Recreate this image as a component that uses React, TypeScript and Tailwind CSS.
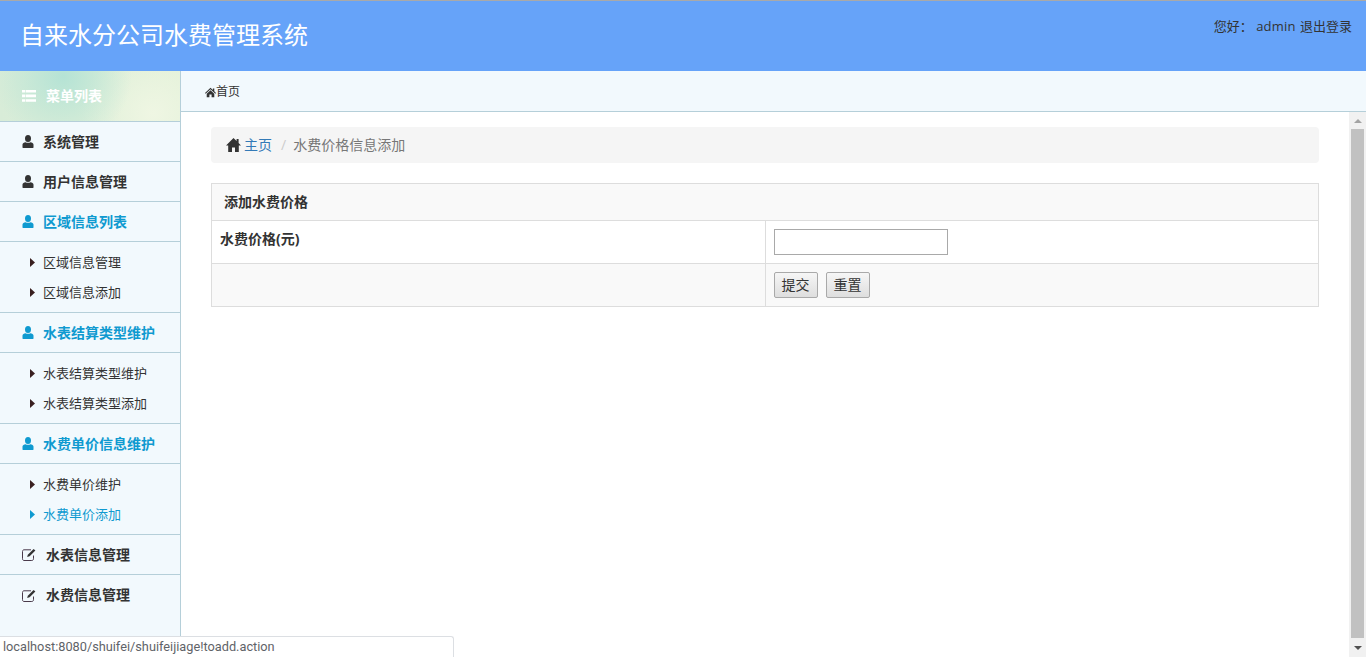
import React from 'react';

const UserIcon = () => (
  <svg width="12" height="13" viewBox="0 0 12 13" className="shrink-0 fill-current">
    <ellipse cx="6" cy="3.6" rx="3" ry="3.5" />
    <path d="M0.5 12.6 V9.6 C0.5 8.2 2 7.6 3.6 7.2 C4.6 8 7.4 8 8.4 7.2 C10 7.6 11.5 8.2 11.5 9.6 V12.6 C11.5 12.9 11.2 13 11 13 H1 C0.8 13 0.5 12.9 0.5 12.6 Z" />
  </svg>
);

const EditIcon = () => (
  <svg width="14" height="13" viewBox="0 0 14 13" className="shrink-0">
    <path d="M11.5 7.5 V10.7 C11.5 11.7 10.9 12.5 9.8 12.5 H2 C1 12.5 0.5 11.7 0.5 10.7 V3.5 C0.5 2.6 1 1.8 2 1.8 H9" fill="none" stroke="#4a3a4a" />
    <path d="M11.6 1 L13.4 2.6 L7.6 8.3 L5.2 8.9 L5.8 6.7 Z" fill="#333" />
  </svg>
);

const Arrow = () => (
  <svg width="5" height="9" viewBox="0 0 5 9" className="shrink-0 fill-current">
    <path d="M0 0 L5 4.5 L0 9 Z" />
  </svg>
);

const ListIcon = () => (
  <svg width="14" height="12" viewBox="0 0 14 12" className="shrink-0 fill-white">
    <path d="M0 0h3v2.6H0zM3.6 0H14v2.6H3.6zM0 4.6h3v2.6H0zM3.6 4.6H14v2.6H3.6zM0 9.2h3v2.6H0zM3.6 9.2H14v2.6H3.6z" />
  </svg>
);

const SmallHomeIcon = () => (
  <svg width="11" height="11" viewBox="0 0 16 16" className="shrink-0 fill-current">
    <path d="M8 1 L11.5 4.4 V2 H13.5 V6.3 L16 8.8 L15 9.8 L8 3.2 L1 9.8 L0 8.8 Z" />
    <path d="M8 4.6 L13.5 9.8 V15 H9.6 V11 H6.4 V15 H2.5 V9.8 Z" />
  </svg>
);

const HomeIcon = () => (
  <svg width="15" height="14" viewBox="0 0 15 14" className="shrink-0 fill-[#333]">
    <path d="M7.5 0 L10.6 3 V1 H12.6 V5 L15 7.4 H12.8 V14 H9 V9.4 H6 V14 H2.2 V7.4 H0 Z" />
  </svg>
);

function MenuRow({ label, active, edit, last }: { label: string; active?: boolean; edit?: boolean; last?: boolean }) {
  return (
    <div className={`flex h-10 items-center pl-[22px] text-sm font-bold ${last ? '' : 'border-b border-[#b5cfd9]'} ${active ? 'text-[#0f9ad0]' : 'text-[#333]'}`}>
      {edit ? <EditIcon /> : <UserIcon />}
      <span className={edit ? 'ml-[10px]' : 'ml-[9px]'}>{label}</span>
    </div>
  );
}

function SubList({ items, activeItem }: { items: string[]; activeItem?: string }) {
  return (
    <div className="h-[71px] border-b border-[#b5cfd9] py-[5px]">
      {items.map((item) => (
        <div key={item} className={`flex h-[30px] items-center pl-[30px] text-[13px] ${item === activeItem ? 'text-[#0f9ad0]' : 'text-[#333]'}`}>
          <span className={item === activeItem ? 'text-[#0f9ad0]' : 'text-[#3a2020]'}>
            <Arrow />
          </span>
          <span className="mt-[2px] ml-2">{item}</span>
        </div>
      ))}
    </div>
  );
}

export default function App() {
  return (
    <div className="relative flex h-[657px] flex-col overflow-hidden bg-white font-['Open_Sans','Noto_Sans_CJK_SC',sans-serif] text-[#333]">
      {/* header */}
      <div className="flex h-[71px] shrink-0 items-start justify-between border-t border-[#a9a9a9] bg-[#66a3f9]">
        <h1 className="mt-[16px] ml-5 text-2xl leading-9 font-normal text-white">自来水分公司水费管理系统</h1>
        <div className="mt-[14px] mr-[14px] text-[13px] leading-[22px] text-[#333]">您好：&nbsp;<span className="mr-px tracking-[0.2px]">admin</span> 退出登录</div>
      </div>

      <div className="flex min-h-0 flex-1">
        {/* sidebar */}
        <div className="w-[181px] shrink-0 border-r border-[#b5cfd9] bg-[#f2f9fd]">
          <div className="flex h-[51px] items-center border-b border-[#b5cfd9] bg-[radial-gradient(circle_at_35%_10%,#b5e3d5_0%,transparent_55%),radial-gradient(circle_at_85%_85%,#eff6e3_0%,transparent_45%),linear-gradient(90deg,#d8ecd8,#e2f1d8)] pl-[22px] text-sm font-bold text-white">
            <ListIcon />
            <span className="ml-[10px]">菜单列表</span>
          </div>
          <MenuRow label="系统管理" />
          <MenuRow label="用户信息管理" />
          <MenuRow label="区域信息列表" active />
          <SubList items={['区域信息管理', '区域信息添加']} />
          <MenuRow label="水表结算类型维护" active />
          <SubList items={['水表结算类型维护', '水表结算类型添加']} />
          <MenuRow label="水费单价信息维护" active />
          <SubList items={['水费单价维护', '水费单价添加']} activeItem="水费单价添加" />
          <MenuRow label="水表信息管理" edit />
          <MenuRow label="水费信息管理" edit last />
        </div>

        <div className="flex min-w-0 flex-1 flex-col">
          {/* top bar */}
          <div className="flex h-[41px] shrink-0 items-center border-b border-[#b5cfd9] bg-[#f2f9fd] pt-[2px] pl-6 text-xs text-[#333]">
            <SmallHomeIcon />
            <span>首页</span>
          </div>

          <div className="flex min-h-0 flex-1">
            <div className="min-w-0 flex-1 px-[30px] pt-[15px]">
              {/* breadcrumb */}
              <div className="flex h-9 items-center rounded bg-[#f5f5f5] pl-[15px] text-sm">
                <HomeIcon />
                <a className="ml-[3px] text-[#337ab7]">主页</a>
                <span className="mr-[7px] ml-[9px] text-[#ccc]">/</span>
                <span className="text-[#777]">水费价格信息添加</span>
              </div>

              {/* form table */}
              <table className="mt-5 w-full table-fixed border-collapse border border-[#ddd] text-sm">
                <tbody>
                  <tr className="h-[37px] bg-[#f9f9f9]">
                    <th colSpan={2} className="border border-[#ddd] pl-3 text-left font-bold">添加水费价格</th>
                  </tr>
                  <tr className="h-[43px]">
                    <td className="w-[554px] border border-[#ddd] p-2 align-top font-bold">水费价格(元)</td>
                    <td className="border border-[#ddd] px-2 py-0">
                      <input type="text" className="block h-[26px] w-[174px] border border-[#a9a9a9] bg-white" />
                    </td>
                  </tr>
                  <tr className="h-[43px] bg-[#f9f9f9]">
                    <td className="border border-[#ddd]"></td>
                    <td className="border border-[#ddd] px-2 py-0">
                      <div className="flex gap-2">
                        <button className="h-[26px] w-11 rounded-[2px] border border-[#a9a9a9] bg-gradient-to-b from-[#f6f6f6] to-[#dedede] text-sm text-[#333]">提交</button>
                        <button className="h-[26px] w-11 rounded-[2px] border border-[#a9a9a9] bg-gradient-to-b from-[#f6f6f6] to-[#dedede] text-sm text-[#333]">重置</button>
                      </div>
                    </td>
                  </tr>
                </tbody>
              </table>
            </div>

            {/* scrollbar */}
            <div className="flex w-[17px] shrink-0 flex-col items-center bg-[#f1f1f1]">
              <div className="flex h-[17px] w-full items-center justify-center">
                <div className="h-0 w-0 border-x-[4px] border-b-[4px] border-x-transparent border-b-[#a3a3a3]" />
              </div>
              <div className="w-[13px] flex-1 bg-[#c1c1c1]" />
              <div className="flex h-[19px] w-full items-center justify-center">
                <div className="h-0 w-0 border-x-[4px] border-t-[4px] border-x-transparent border-t-[#505050]" />
              </div>
            </div>
          </div>
        </div>
      </div>

      {/* browser status bubble */}
      <div className="absolute bottom-0 left-0 flex h-[21px] w-[454px] items-center rounded-tr-[3px] border-t border-r border-[#dcdfe3] bg-white pl-[3px] font-['Roboto','Noto_Sans_CJK_SC',sans-serif] text-[12.75px] text-[#5f6368]">
        localhost:8080/shuifei/shuifeijiage!toadd.action
      </div>
    </div>
  );
}
